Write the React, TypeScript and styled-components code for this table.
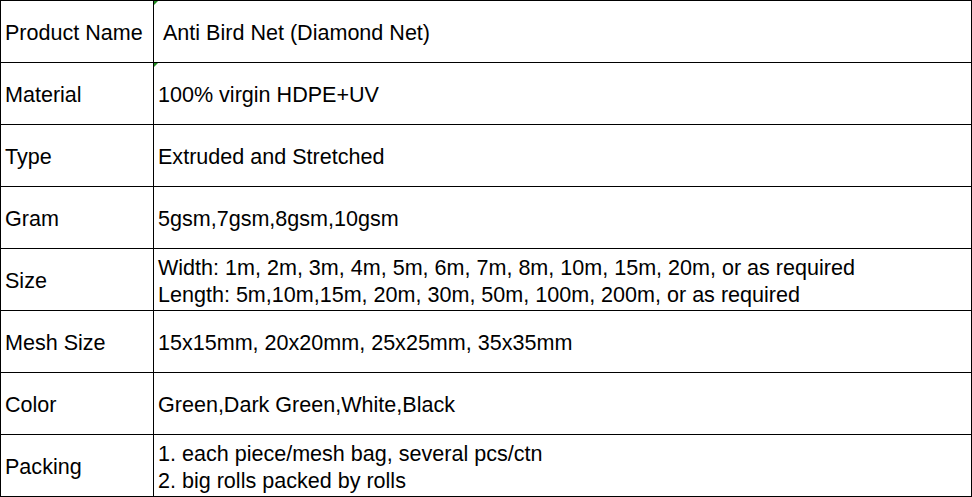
import React from "react";
import styled, { createGlobalStyle } from "styled-components";

const GlobalStyle = createGlobalStyle`
  html, body {
    margin: 0;
    padding: 0;
    background: #ffffff;
  }
  body {
    font-family: "Liberation Sans", Arial, sans-serif;
    color: #000000;
  }
`;

type Row = {
  label: string;
  lines: string[];
  marked?: boolean;
  indent?: boolean;
};

const rows: Row[] = [
  { label: "Product Name", lines: ["Anti Bird Net (Diamond Net)"], marked: true, indent: true },
  { label: "Material", lines: ["100% virgin HDPE+UV"], marked: true },
  { label: "Type", lines: ["Extruded and Stretched"] },
  { label: "Gram", lines: ["5gsm,7gsm,8gsm,10gsm"] },
  {
    label: "Size",
    lines: [
      "Width: 1m, 2m, 3m, 4m, 5m, 6m, 7m, 8m, 10m, 15m, 20m, or as required",
      "Length: 5m,10m,15m, 20m, 30m, 50m, 100m, 200m, or as required"
    ]
  },
  { label: "Mesh Size", lines: ["15x15mm, 20x20mm, 25x25mm, 35x35mm"] },
  { label: "Color", lines: ["Green,Dark Green,White,Black"] },
  {
    label: "Packing",
    lines: ["1. each piece/mesh bag, several pcs/ctn", "2. big rolls packed by rolls"]
  }
];

const Sheet = styled.div`
  display: grid;
  grid-template-columns: 153px 818px;
  grid-auto-rows: 62px;
  width: 971px;
  border-top: 1px solid #000;
  border-left: 1px solid #000;
`;

const Cell = styled.div<{ $indent?: boolean }>`
  position: relative;
  display: flex;
  flex-direction: column;
  justify-content: center;
  box-sizing: border-box;
  border-right: 1px solid #000;
  border-bottom: 1px solid #000;
  padding-top: 2px;
  padding-left: ${(p) => (p.$indent ? "9px" : "4px")};
  font-size: 21.55px;
  line-height: 27px;
  white-space: nowrap;
`;

const LabelCell = styled(Cell)`
  padding-left: 4px;
`;

const CommentMark = styled.span`
  position: absolute;
  top: 0;
  left: 0;
  width: 0;
  height: 0;
  border-top: 4px solid #1f8a1f;
  border-right: 4px solid transparent;
`;

export default function App() {
  return (
    <>
      <GlobalStyle />
      <Sheet>
        {rows.map((row) => (
          <React.Fragment key={row.label}>
            <LabelCell>{row.label}</LabelCell>
            <Cell $indent={row.indent}>
              {row.marked && <CommentMark />}
              {row.lines.map((line) => (
                <span key={line}>{line}</span>
              ))}
            </Cell>
          </React.Fragment>
        ))}
      </Sheet>
    </>
  );
}
